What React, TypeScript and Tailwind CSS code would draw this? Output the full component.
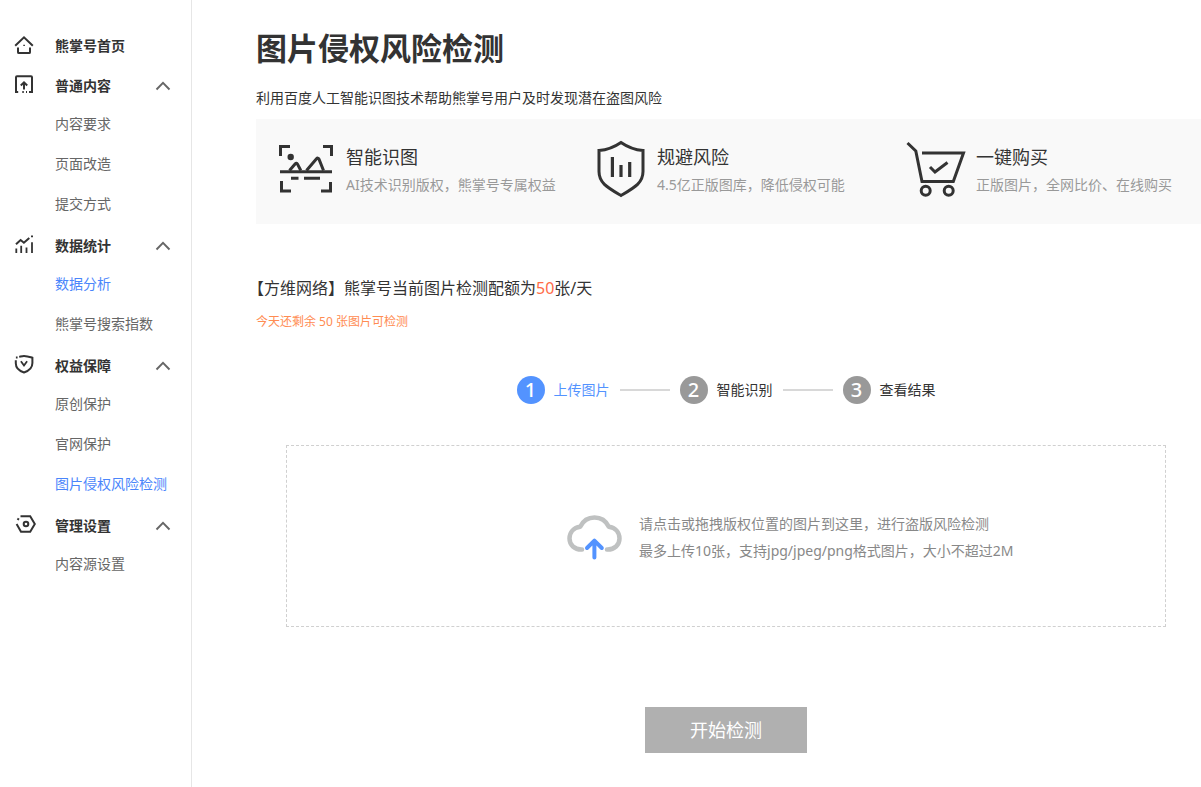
import type { ReactNode } from 'react';

type MenuItem = { label: string; active?: boolean };
type MenuSection = { title: string; icon: ReactNode; items: MenuItem[] };

function MenuIcon({ children }: { children: ReactNode }) {
  return (
    <svg
      className="size-6 shrink-0"
      viewBox="0 0 24 24"
      fill="none"
      stroke="#333333"
      strokeWidth="2"
      aria-hidden="true"
    >
      {children}
    </svg>
  );
}

const homeIcon = (
  <MenuIcon>
    <path d="M3.2 11.8 12 3.4l8.8 8.4M6 13.5v4.7c0 .6.3.9.9.9h10.2c.6 0 .9-.3.9-.9v-4.7" />
    <path d="M11.3 11.4h1.6" strokeWidth="1.4" />
  </MenuIcon>
);

const contentIcon = (
  <MenuIcon>
    <path d="M6.2 18H4V3.2c0-.7.3-1 1-1h14c.7 0 1 .3 1 1V18h-3M10.3 18h1.5M14 18h1" />
    <path d="M12 15.5v-7M8.800 11.500 12 8.300l3.200 3.200" />
  </MenuIcon>
);

const statsIcon = (
  <MenuIcon>
    <path d="M4 10.3 8.6 6l3.3 2.8L17.3 4" />
    <path d="M4.3 14.5V19M9.2 11.8V19M14.5 13.5V19M20 8.2V19M19 2.3h2" strokeWidth="1.8" />
  </MenuIcon>
);

const rightsIcon = (
  <MenuIcon>
    <path d="M7.2 2.9C8.8 2.5 10.3 1.9 12 1.9c3 0 5.3.8 8.4 1.8v5.4c0 4.8-3 7.7-8.4 9.4-5.5-1.7-8.2-4.7-8.2-9.2V6.2" />
    <path d="m8.9 7.2 3.1 4.3 3.1-4.3M3.9 3.5h1.7" strokeWidth="1.8" />
  </MenuIcon>
);

const settingsIcon = (
  <MenuIcon>
    <path d="M8.5 2.3h9.7l4.6 7.7-4.6 7.7H9L4.6 9.900" />
    <circle cx="14" cy="10" r="2.3" />
    <path d="m5.7 6 1-1.700" />
  </MenuIcon>
);

const sections: MenuSection[] = [
  {
    title: '普通内容',
    icon: contentIcon,
    items: [{ label: '内容要求' }, { label: '页面改造' }, { label: '提交方式' }],
  },
  {
    title: '数据统计',
    icon: statsIcon,
    items: [{ label: '数据分析', active: true }, { label: '熊掌号搜索指数' }],
  },
  {
    title: '权益保障',
    icon: rightsIcon,
    items: [
      { label: '原创保护' },
      { label: '官网保护' },
      { label: '图片侵权风险检测', active: true },
    ],
  },
  {
    title: '管理设置',
    icon: settingsIcon,
    items: [{ label: '内容源设置' }],
  },
];

function Sidebar() {
  return (
    <nav className="flex w-48 shrink-0 flex-col gap-1 border-r border-[#e6e6e6] pt-7 text-sm">
      <a href="#home" className="flex h-9 items-center gap-[19px] pl-3 font-bold text-[#333333]">
        {homeIcon}
        熊掌号首页
      </a>
      {sections.map((section) => (
        <div key={section.title}>
          <button
            type="button"
            aria-expanded="true"
            className="flex h-9 w-full items-center gap-[19px] pr-5 pl-3 font-bold text-[#333333]"
          >
            {section.icon}
            {section.title}
            <svg className="ml-auto h-4 w-4" viewBox="0 0 16 16" fill="none" aria-hidden="true">
              <path d="M1.500 11.500 8 4.800l6.500 6.700" stroke="#666666" strokeWidth="1.900" />
            </svg>
          </button>
          <ul>
            {section.items.map((item) => (
              <li key={item.label}>
                <a
                  href="#menu"
                  className={`flex h-10 items-center pl-[55px] ${item.active ? 'text-[#4a85fb]' : 'text-[#666666]'}`}
                >
                  {item.label}
                </a>
              </li>
            ))}
          </ul>
        </div>
      ))}
    </nav>
  );
}

const features = [
  {
    title: '智能识图',
    text: 'AI技术识别版权，熊掌号专属权益',
    icon: (
      <svg className="h-15 w-15 shrink-0" viewBox="0 0 60 60" fill="none" stroke="#333333" strokeWidth="3" aria-hidden="true">
        <path d="M4.500 17V7.500H14M47 7.500h8.500V17M5.500 42v10H15M45 52h9.500V43" />
        <path d="M4 32.700h52M15 39.300h7.500M28 39.300h16" />
        <path d="m13.500 31.500 5.800-6.700c.8-.9 1.600-.8 2.200.3l3.300 6.400M30.500 31.500l10-11.700c.9-1 1.900-.9 2.500.4l4.500 11.300" />
        <circle cx="14.700" cy="18" r="3.200" fill="#333333" stroke="none" />
      </svg>
    ),
  },
  {
    title: '规避风险',
    text: '4.5亿正版图库，降低侵权可能',
    icon: (
      <svg className="h-15 w-14 shrink-0" viewBox="0 0 56 60" fill="none" stroke="#333333" strokeWidth="3" aria-hidden="true">
        <path d="M30 3.500C23.500 8 17 10.800 8 11.500V32.500C8 44 16.500 48.500 30 56.500 43.500 48.500 52 44 52 32.500V11.500C43 10.800 36.500 8 30 3.500Z" />
        <path d="M21.400 18v20M30 26v12M38.700 23v15" strokeWidth="3.200" />
      </svg>
    ),
  },
  {
    title: '一键购买',
    text: '正版图片，全网比价、在线购买',
    icon: (
      <svg className="h-15 w-15 shrink-0" viewBox="0 0 60 60" fill="none" stroke="#333333" strokeWidth="3" aria-hidden="true">
        <path d="m1.500 4 8.300 8 6.200 30.500h31.300L57.500 14H16" />
        <path d="m24 28 5 5 12.500-9.500" />
        <circle cx="19.700" cy="51.700" r="4.500" />
        <circle cx="42.700" cy="51.700" r="4.500" />
      </svg>
    ),
  },
];

function Step({ index, label, active }: { index: number; label: string; active?: boolean }) {
  return (
    <li className="flex items-center gap-[9px]">
      <span
        className={`flex size-7 items-center justify-center rounded-full text-xl font-medium text-white ${active ? 'bg-[#5393ff]' : 'bg-[#999999]'}`}
      >
        {index}
      </span>
      <span className={active ? 'text-[#5393ff]' : 'text-[#333333]'}>{label}</span>
    </li>
  );
}

function StepLine() {
  return <li aria-hidden="true" className="h-0.5 w-[50px] bg-[#d8d8d8]" />;
}

export default function App() {
  return (
    <div className="flex min-h-screen bg-white font-['Noto_Sans','Noto_Sans_CJK_SC',sans-serif] text-[#333333]">
      <Sidebar />
      <main className="min-w-0 flex-1 pt-7 pb-8 pl-16">
        <h1 className="text-[31px] leading-10 font-bold">图片侵权风险检测</h1>
        <p className="mt-5 text-sm leading-5">
          利用百度人工智能识图技术帮助熊掌号用户及时发现潜在盗图风险
        </p>

        <section className="mt-[11px] grid grid-cols-3 bg-[#f9f9f9] pt-5 pb-[25px]">
          {features.map((feature) => (
            <div key={feature.title} className="flex gap-2.5 pl-5">
              {feature.icon}
              <div className="pt-1 whitespace-nowrap">
                <h2 className="text-lg leading-7">{feature.title}</h2>
                <p className="text-sm leading-7 text-[#999999]">{feature.text}</p>
              </div>
            </div>
          ))}
        </section>

        <h2 className="mt-[52px] -ml-2 text-base leading-6">
          【方维网络】熊掌号当前图片检测配额为<span className="text-[#ff6c47]">50</span>张/天
        </h2>
        <p className="mt-3 text-xs leading-5 text-[#ff8c52]">今天还剩余 50 张图片可检测</p>

        <section className="mt-11 flex flex-col items-center pr-[35px] pl-[30px]">
          <ol className="flex items-center gap-2.5 text-sm">
            <Step index={1} label="上传图片" active />
            <StepLine />
            <Step index={2} label="智能识别" />
            <StepLine />
            <Step index={3} label="查看结果" />
          </ol>

          <label className="mt-[41px] flex h-[182px] w-full cursor-pointer items-center gap-4 border border-dashed border-[#d0d0d0] pt-px pl-[280px] text-sm text-[#888888]">
            <input type="file" multiple accept=".jpg,.jpeg,.png" className="sr-only" />
            <svg className="h-12 w-14 shrink-0" viewBox="0 0 56 48" fill="none" strokeLinecap="round" strokeLinejoin="round" aria-hidden="true">
              <path
                d="M15 36.500C7.500 36.800 2.500 31.800 2.500 25.500c0-6.200 4-10.800 10.700-11.800C16 8 21 4.500 27.500 4.500S39 8 41.800 13.700c6.700 1 10.700 5.600 10.700 11.800 0 6.300-5 11.300-12.500 11"
                stroke="#bfc1c1"
                strokeWidth="4.500"
              />
              <path d="M27.400 44.500V28M20 35l7.400-7.300 7.400 7.300" stroke="#5393ff" strokeWidth="4" />
            </svg>
            <span className="leading-[27px]">
              请点击或拖拽版权位置的图片到这里，进行盗版风险检测
              <br />
              最多上传10张，支持jpg/jpeg/png格式图片，大小不超过2M
            </span>
          </label>

          <button type="button" className="mt-20 h-[46px] w-[162px] bg-[#b0b0b0] text-lg text-white">
            开始检测
          </button>
        </section>
      </main>
    </div>
  );
}
